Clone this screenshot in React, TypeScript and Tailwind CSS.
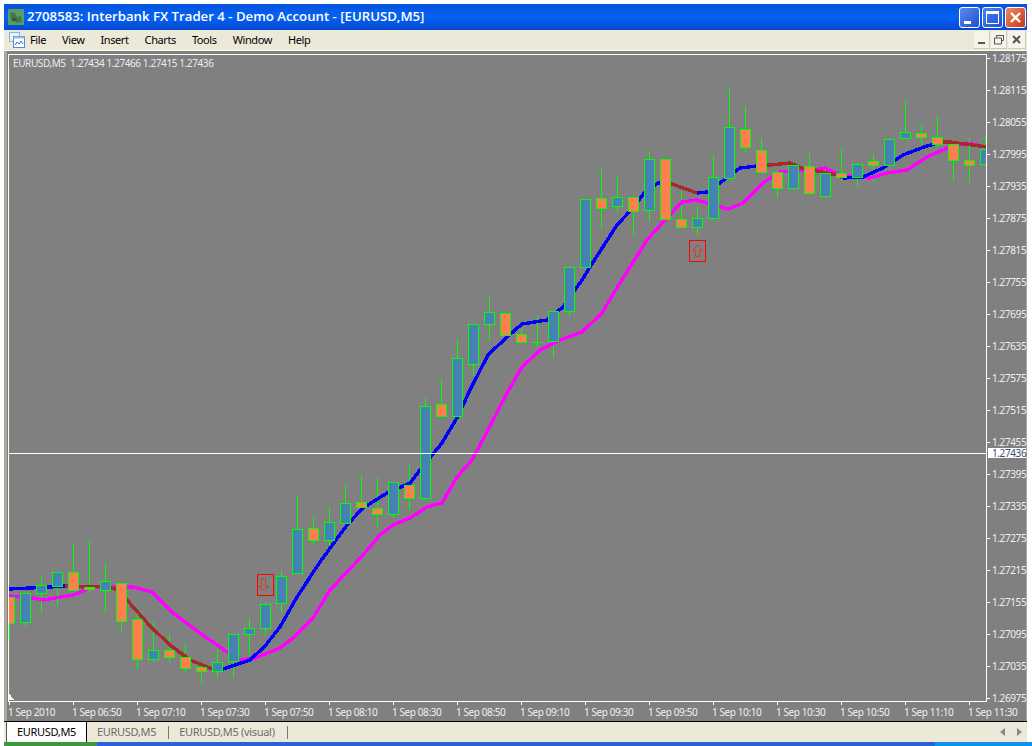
import React from 'react';

type Candle = [number, number, number, number, number, 'b' | 'o'];

// x, body top, body bottom, wick top, wick bottom, colour
const candles: Candle[] = [
  [9, 597, 623, 597, 641, 'o'], [25, 593, 622, 593, 626, 'b'], [41, 585, 593, 577, 613, 'b'],
  [57, 572, 586, 572, 606, 'b'], [73, 572, 590, 544, 590, 'o'], [89, 587, 589, 541, 592, 'o'],
  [105, 581, 590, 563, 612, 'b'], [121, 583, 621, 583, 632, 'o'], [137, 619, 659, 608, 669, 'o'],
  [153, 650, 659, 622, 662, 'b'], [169, 650, 657, 634, 662, 'o'], [185, 657, 668, 644, 673, 'o'],
  [201, 667, 671, 663, 683, 'o'], [217, 662, 671, 649, 678, 'b'], [233, 634, 661, 634, 678, 'b'],
  [249, 628, 634, 618, 655, 'b'], [265, 604, 628, 602, 636, 'b'], [281, 576, 603, 570, 613, 'b'],
  [297, 529, 573, 496, 573, 'b'], [313, 528, 540, 517, 544, 'o'], [329, 522, 540, 507, 545, 'b'],
  [345, 503, 523, 485, 523, 'b'], [361, 502, 507, 475, 512, 'o'], [377, 508, 514, 478, 527, 'o'],
  [393, 482, 514, 482, 518, 'b'], [409, 485, 498, 465, 510, 'o'], [425, 406, 498, 398, 500, 'b'],
  [441, 404, 416, 379, 416, 'o'], [457, 358, 416, 339, 422, 'b'], [473, 324, 364, 324, 377, 'b'],
  [489, 312, 324, 296, 341, 'b'], [505, 313, 335, 312, 335, 'o'], [521, 334, 342, 327, 343, 'o'],
  [537, 342, 342, 316, 347, 'o'], [553, 311, 341, 311, 358, 'b'], [569, 267, 311, 267, 317, 'b'],
  [585, 199, 267, 199, 267, 'b'], [601, 198, 208, 168, 229, 'o'], [617, 197, 206, 177, 213, 'b'],
  [633, 197, 211, 196, 235, 'o'], [649, 159, 210, 151, 222, 'b'], [665, 159, 219, 159, 219, 'o'],
  [681, 219, 227, 191, 227, 'o'], [697, 218, 227, 207, 235, 'b'], [713, 177, 218, 155, 220, 'b'],
  [729, 127, 178, 87, 178, 'b'], [745, 129, 147, 106, 153, 'o'], [761, 150, 172, 138, 172, 'o'],
  [777, 172, 188, 171, 198, 'o'], [793, 165, 188, 165, 188, 'b'], [809, 166, 193, 153, 195, 'o'],
  [825, 173, 196, 170, 196, 'b'], [841, 173, 177, 149, 181, 'o'], [857, 164, 177, 163, 187, 'b'],
  [873, 161, 165, 154, 182, 'o'], [889, 139, 165, 138, 165, 'b'], [905, 132, 138, 101, 138, 'b'],
  [921, 133, 137, 125, 145, 'o'], [937, 137, 144, 116, 147, 'o'], [953, 144, 160, 144, 181, 'o'],
  [969, 160, 165, 138, 183, 'o'], [985, 149, 164, 136, 164, 'b'],
];

const fastLine: { color: string; points: string }[] = [
  { color: '#0000ff', points: '9,589 30,588 50,587 65,586' },
  { color: '#a52a2a', points: '65,586 85,587 105,586 118,590 127,600 150,626 170,645 190,660 210,668 220,670' },
  { color: '#0000ff', points: '220,670 250,660 265,646 280,627 297,597 320,562 347,525 363,508 387,493 410,483 420,470 442,443 457,418 470,390 488,355 507,337 522,324 547,320 563,307 582,280 590,267 617,225 633,208 645,192 658,183 666,183' },
  { color: '#a52a2a', points: '666,183 672,184 697,193' },
  { color: '#0000ff', points: '697,193 707,192 720,183 740,168 757,166 762,165' },
  { color: '#a52a2a', points: '762,165 770,165 790,163 802,168 837,175 843,178' },
  { color: '#0000ff', points: '843,178 863,177 883,168 903,155 927,146 942,142' },
  { color: '#a52a2a', points: '942,142 950,142 965,144 987,147' },
];

const slowLine = '9,596 33,598 43,600 73,595 90,588 113,587 133,587 152,592 173,613 200,633 227,652 240,660 255,658 280,648 293,638 313,618 330,590 363,555 380,535 393,525 410,518 427,507 442,503 457,477 472,460 488,430 507,393 522,367 540,350 560,340 582,332 602,313 620,283 647,240 665,220 682,202 697,200 707,203 728,209 743,203 763,183 780,172 813,170 825,168 840,175 870,178 887,173 907,170 927,157 947,148 967,143 987,147';

const prices = ['1.28175', '1.28115', '1.28055', '1.27995', '1.27935', '1.27875', '1.27815', '1.27755', '1.27695', '1.27635', '1.27575', '1.27515', '1.27455', '1.27395', '1.27335', '1.27275', '1.27215', '1.27155', '1.27095', '1.27035', '1.26975'];
const times = ['1 Sep 2010', '1 Sep 06:50', '1 Sep 07:10', '1 Sep 07:30', '1 Sep 07:50', '1 Sep 08:10', '1 Sep 08:30', '1 Sep 08:50', '1 Sep 09:10', '1 Sep 09:30', '1 Sep 09:50', '1 Sep 10:10', '1 Sep 10:30', '1 Sep 10:50', '1 Sep 11:10', '1 Sep 11:30'];
const menus = ['File', 'View', 'Insert', 'Charts', 'Tools', 'Window', 'Help'];

const Chart = () => (
  <svg viewBox="9 55 977 645" width={977} height={645} className="block">
    <g shapeRendering="crispEdges">
      {candles.map(([x, , , wt, wb]) => (
        <line key={x} x1={x + 0.5} x2={x + 0.5} y1={wt} y2={wb} stroke="#00ff00" />
      ))}
    </g>
    <polyline points={slowLine} fill="none" stroke="#ff00ff" strokeWidth={3.4} strokeLinejoin="round" shapeRendering="crispEdges" />
    {fastLine.map((s, i) => (
      <polyline key={i} points={s.points} fill="none" stroke={s.color} strokeWidth={3.4} strokeLinejoin="round" shapeRendering="crispEdges" />
    ))}
    <g shapeRendering="crispEdges">
      {candles.map(([x, top, bottom, , , c]) =>
        top === bottom ? (
          <line key={x} x1={x - 5} x2={x + 6} y1={top + 0.5} y2={top + 0.5} stroke="#00ff00" />
        ) : (
          <rect key={x} x={x - 4.5} y={top + 0.5} width={10} height={bottom - top} fill={c === 'b' ? '#4682b4' : '#ff7f50'} stroke="#00ff00" />
        )
      )}
      <line x1={9} x2={986} y1={453.5} y2={453.5} stroke="#ffffff" />
      <rect x={257.5} y={574.5} width={16} height={21} fill="none" stroke="#ff0000" />
      <rect x={689.5} y={240.5} width={16} height={21} fill="none" stroke="#ff0000" />
    </g>
    <path d="M261.5 578.5h4v8h3.5l-5.5 4l-5.5-4h3.5z" fill="none" stroke="#e03a20" />
    <path d="M697.5 245l5 6h-3v5.5h-4v-5.5h-3z" fill="none" stroke="#e03a20" />
    <path d="M9 693l5 7h-5z" fill="#ffffff" shapeRendering="crispEdges" />
  </svg>
);

const App: React.FC = () => {
  return (
    <div className="w-[1032px] h-[746px] overflow-hidden bg-white pt-1 flex flex-col font-['Noto_Sans',sans-serif]">
      <div className="ml-1 mr-[5px] flex flex-col flex-1 min-h-0">
        {/* title bar */}
        <div className="h-[26px] shrink-0 flex items-center pl-1 pr-[1px] bg-linear-to-b from-[#0553dc] via-[#0563f2] to-[#0448d2]">
          <svg width={16} height={16} viewBox="0 0 16 16" className="shrink-0 mt-[-1px]">
            <rect width={16} height={16} fill="#5c9a68" />
            <path d="M2 3l5 1 2 4 4-1 1 6-5 1-2-3-4 1z" fill="#3c7d4a" />
            <path d="M6 8l3 3-3 2-2-3z" fill="#225f32" />
          </svg>
          <span className="ml-[3px] text-[13.2px] leading-none font-semibold text-white font-['Open_Sans',sans-serif] whitespace-nowrap">2708583: Interbank FX Trader 4 - Demo Account - [EURUSD,M5]</span>
          <div className="ml-auto flex gap-[2px]">
            <div className="w-[21px] h-[21px] rounded-[3px] border border-white bg-linear-to-br from-[#5c8cf0] to-[#1c4fd0] relative">
              <div className="absolute left-[4px] bottom-[3px] w-[7px] h-[3px] bg-white" />
            </div>
            <div className="w-[21px] h-[21px] rounded-[3px] border border-white bg-linear-to-br from-[#4f84ee] to-[#1c4fd0] p-[3px]">
              <div className="w-full h-full border border-white border-t-[3px]" />
            </div>
            <div className="w-[21px] h-[21px] rounded-[3px] border border-white bg-linear-to-br from-[#ee8a66] to-[#c92f10] flex items-center justify-center">
              <svg width={13} height={13} viewBox="0 0 13 13"><path d="M2 2l9 9M11 2l-9 9" stroke="#fff" strokeWidth={2.4} /></svg>
            </div>
          </div>
        </div>

        {/* menu bar */}
        <div className="h-[20px] shrink-0 flex items-center bg-[#ece9d8] text-[11px] tracking-[-0.4px] text-black pr-[1px]">
          <svg width={16} height={16} viewBox="0 0 16 16" className="ml-[5px] shrink-0">
            <rect x={0.5} y={0.5} width={10} height={9} fill="#eaf2fc" stroke="#8fb0e4" />
            <rect x={4.5} y={4.5} width={11} height={11} fill="#ffffff" stroke="#5a88d8" />
            <rect x={4.5} y={4.5} width={11} height={2} fill="#9dbcf0" />
            <path d="M6 13l2-3 2 2 2-3 2 3" fill="none" stroke="#3a6cc8" />
          </svg>
          <div className="ml-[5px] flex gap-[16px]">
            {menus.map(m => <span key={m}>{m}</span>)}
          </div>
          <div className="ml-auto flex gap-[1px] h-[18px]">
            <div className="w-4 bg-[#f6f4ea] border-r border-b border-[#d0ccb8] flex items-end justify-center pb-[4px]"><div className="w-[7px] h-[2px] bg-[#555]" /></div>
            <div className="w-4 bg-[#f6f4ea] border-r border-b border-[#d0ccb8] flex items-center justify-center">
              <svg width={10} height={10} viewBox="0 0 10 10"><path d="M2.5 2.5V.5h7v5h-2M.5 3h7v6h-7z" fill="none" stroke="#555" /></svg>
            </div>
            <div className="w-[18px] bg-[#f6f4ea] border-r border-b border-[#d0ccb8] flex items-center justify-center">
              <svg width={9} height={9} viewBox="0 0 9 9"><path d="M1 1l7 7M8 1l-7 7" stroke="#555" strokeWidth={2} /></svg>
            </div>
          </div>
        </div>
        <div className="h-px shrink-0 bg-white" />

        {/* chart */}
        <div className="h-[670px] shrink-0 bg-[#808080] border-l-[3px] border-r border-[#aca899] pl-px pt-[3px] text-[10px] tracking-[-0.4px] leading-none text-[#f0f0f0]">
          <div className="flex">
            <div className="relative border border-white shrink-0">
              <Chart />
              <span className="absolute left-[4px] top-[3px] whitespace-pre text-[#ececec]">EURUSD,M5  1.27434 1.27466 1.27415 1.27436</span>
            </div>
            <div className="relative flex flex-col gap-[24px] grow">
              {prices.map(p => (
                <div key={p} className="h-2 flex items-center">
                  <div className="w-[3px] h-px bg-white" />
                  <span className="ml-[2px]">{p}</span>
                </div>
              ))}
              <span className="absolute left-[1px] top-[394px] w-[38px] h-[10px] pl-[4px] bg-white text-[#3a4a78] flex items-center">1.27436</span>
            </div>
          </div>
          <div className="flex">
            {times.map(t => (
              <div key={t} className="w-[64px] shrink-0">
                <div className="ml-px w-px h-[3px] bg-white" />
                <div className="mt-[2px] whitespace-nowrap">{t}</div>
              </div>
            ))}
          </div>
        </div>

        {/* tabs */}
        <div className="h-px shrink-0 bg-black" />
        <div className="flex-1 flex items-stretch bg-[#ece9d8] text-[11px] tracking-[-0.3px] text-[#6c6c6c] pr-[4px] pb-[4px]">
          <div className="ml-[2px] w-px bg-[#555]" />
          <div className="w-[80px] h-[20px] bg-white border-r border-black text-black flex items-center justify-center">EURUSD,M5</div>
          <div className="flex items-center h-[20px]">
            <span className="ml-[10px]">EURUSD,M5</span>
            <div className="ml-[12px] w-px h-[13px] bg-[#777]" />
            <span className="ml-[10px]">EURUSD,M5 (visual)</span>
            <div className="ml-[12px] w-px h-[13px] bg-[#777]" />
          </div>
          <div className="ml-auto flex items-center h-[20px] gap-[12px] pr-[1px]">
            <svg width={5} height={8} viewBox="0 0 5 8"><path d="M5 0v8L0 4z" fill="#8a8a8a" /></svg>
            <svg width={5} height={8} viewBox="0 0 5 8"><path d="M0 0v8l5-4z" fill="#8a8a8a" /></svg>
          </div>
        </div>
      </div>
      {/* taskbar sliver */}
      <div className="h-[4px] shrink-0 flex pl-1">
        <div className="w-[93px] bg-[#3c9a3c]" />
        <div className="flex-1 bg-[#2a62d8]" />
        <div className="w-[97px] bg-[#1090e8]" />
      </div>
    </div>
  );
};

export default App;
